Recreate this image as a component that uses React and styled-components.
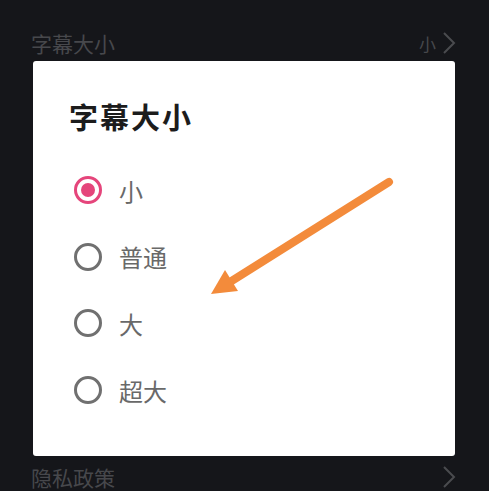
import React, { useState } from 'react';
import styled, { createGlobalStyle } from 'styled-components';

const GlobalStyle = createGlobalStyle`
  html, body {
    margin: 0;
    padding: 0;
    background: #15161a;
  }
  body {
    font-family: "Noto Sans CJK SC", "Noto Sans", sans-serif;
  }
`;

const Page = styled.div`
  position: relative;
  width: 489px;
  height: 491px;
  overflow: hidden;
  background: #15161a;
`;

const SettingsList = styled.div`
  display: flex;
  flex-direction: column;
  padding: 12px 33px 0 31px;
`;

const SettingRow = styled.div`
  display: flex;
  align-items: center;
  justify-content: space-between;
  height: 62px;
  color: #47484c;
  font-size: 21px;
  flex-shrink: 0;
`;

const RowValue = styled.div`
  display: flex;
  align-items: center;
  gap: 6px;
  font-size: 17px;
`;

const Chevron = () => (
  <svg width="14" height="24" viewBox="0 0 14 24">
    <path d="M2 2 L12 12 L2 22" fill="none" stroke="#4a4b4f" strokeWidth="2" />
  </svg>
);

const Dialog = styled.div`
  position: absolute;
  left: 33px;
  top: 61px;
  width: 422px;
  height: 395px;
  box-sizing: border-box;
  background: #ffffff;
  border-radius: 3px;
  padding: 35px 0 0 36px;
`;

const Title = styled.h2`
  margin: 0 0 21px 0;
  font-size: 29px;
  font-weight: 600;
  color: #1c1c1c;
  letter-spacing: 2px;
  line-height: 40px;
`;

const Options = styled.div`
  display: flex;
  flex-direction: column;
`;

const Option = styled.label`
  display: flex;
  align-items: center;
  height: 66.6px;
  gap: 17px;
  cursor: pointer;
  color: #696969;
  font-size: 24px;
`;

const Radio = styled.span`
  position: relative;
  width: 28px;
  height: 28px;
  box-sizing: border-box;
  border-radius: 50%;
  border: 3px solid ${({ $checked }) => ($checked ? '#e5457b' : '#707070')};
  margin-left: 5px;

  &::after {
    content: '';
    position: absolute;
    left: 4px;
    top: 4px;
    width: 14px;
    height: 14px;
    border-radius: 50%;
    background: #e5457b;
    display: ${({ $checked }) => ($checked ? 'block' : 'none')};
  }
`;

const ArrowLayer = styled.svg`
  position: absolute;
  left: 0;
  top: 0;
  pointer-events: none;
`;

const sizes = ['小', '普通', '大', '超大'];
const rows = ['字幕大小', '', '', '', '', '', '', '隐私政策'];

export default function App() {
  const [selected, setSelected] = useState('小');

  return (
    <Page>
      <GlobalStyle />
      <SettingsList>
        {rows.map((label, i) => (
          <SettingRow key={i}>
            <span>{label}</span>
            {i === 0 && (
              <RowValue>
                小<Chevron />
              </RowValue>
            )}
            {i === rows.length - 1 && (
              <RowValue>
                <Chevron />
              </RowValue>
            )}
          </SettingRow>
        ))}
      </SettingsList>

      <Dialog>
        <Title>字幕大小</Title>
        <Options>
          {sizes.map((s) => (
            <Option key={s} onClick={() => setSelected(s)}>
              <Radio $checked={selected === s} />
              <span>{s}</span>
            </Option>
          ))}
        </Options>
      </Dialog>

      <ArrowLayer width="489" height="491" viewBox="0 0 489 491">
        <line x1="389" y1="182" x2="230" y2="282" stroke="#f38b3b" strokeWidth="8" strokeLinecap="round" />
        <polygon points="211,294 225,270 238,291" fill="#f38b3b" />
      </ArrowLayer>
    </Page>
  );
}
